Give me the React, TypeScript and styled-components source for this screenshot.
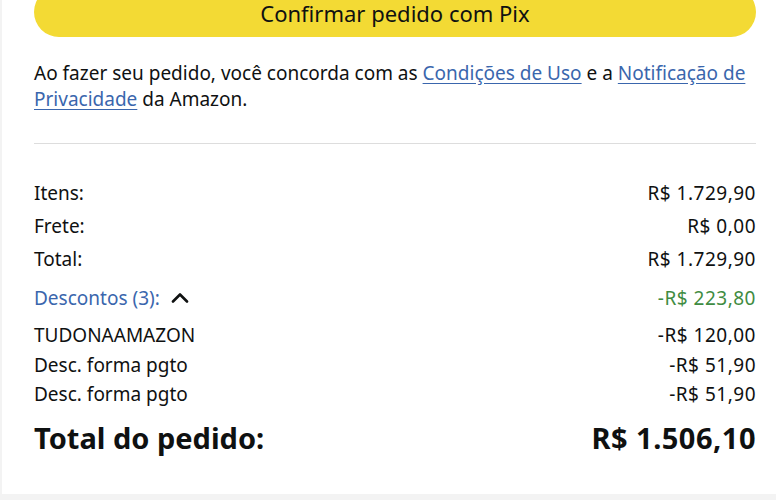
import React from "react";
import styled, { createGlobalStyle } from "styled-components";

const GlobalStyle = createGlobalStyle`
  html, body {
    margin: 0;
    padding: 0;
    background: #f3f3f3;
  }
  body {
    font-family: "Noto Sans", "Liberation Sans", Arial, sans-serif;
    color: #0f1111;
  }
`;

const Card = styled.div`
  margin-left: 2px;
  height: 494px;
  background: #ffffff;
  box-sizing: border-box;
  padding: 0 20px 0 32px;
  overflow: hidden;
  display: flex;
  flex-direction: column;
`;

const ConfirmButton = styled.button`
  margin-top: -13px;
  height: 50px;
  width: 100%;
  border: none;
  border-radius: 25px;
  background: #f3da34;
  color: #0f1111;
  font-family: inherit;
  font-size: 22px;
  line-height: 1;
  display: flex;
  align-items: center;
  justify-content: center;
  padding: 2px 0 0;
  box-sizing: border-box;
  cursor: pointer;
`;

const Legal = styled.p`
  margin: 23px 0 0;
  font-size: 19px;
  line-height: 26px;
`;

const Link = styled.a`
  color: #3a66ad;
  text-decoration: underline;
  text-underline-offset: 3px;
`;

const Divider = styled.hr`
  margin: 31px 0 0;
  border: none;
  height: 1px;
  background: #dddddd;
`;

const Summary = styled.div`
  margin-top: 32px;
  display: flex;
  flex-direction: column;
`;

const Row = styled.div<{ $compact?: boolean; $gap?: number }>`
  display: flex;
  justify-content: space-between;
  align-items: center;
  height: ${(p) => (p.$compact ? "29.5px" : "33px")};
  margin-top: ${(p) => p.$gap ?? 0}px;
  font-size: 19px;
`;

const Label = styled.span<{ $tone?: "blue" }>`
  display: flex;
  align-items: center;
  gap: 11px;
  color: ${(p) => (p.$tone === "blue" ? "#3a66ad" : "#0f1111")};
`;

const Amount = styled.span<{ $tone?: "green" }>`
  letter-spacing: 0.5px;
  color: ${(p) => (p.$tone === "green" ? "#3f8c42" : "#0f1111")};
`;

const TotalRow = styled.div`
  display: flex;
  justify-content: space-between;
  align-items: center;
  margin-top: 8px;
  height: 40px;
  font-size: 29px;
  font-weight: 700;
`;

const TotalAmount = styled.span`
  letter-spacing: 0.5px;
`;

const Chevron = () => (
  <svg width="18" height="11" viewBox="0 0 18 11" aria-hidden="true">
    <polyline
      points="2,9.5 9,2.5 16,9.5"
      fill="none"
      stroke="#0f1111"
      strokeWidth="2.6"
      strokeLinecap="round"
      strokeLinejoin="round"
    />
  </svg>
);

export default function App() {
  return (
    <>
      <GlobalStyle />
      <Card>
        <ConfirmButton>Confirmar pedido com Pix</ConfirmButton>
        <Legal>
          Ao fazer seu pedido, você concorda com as <Link href="#">Condições de Uso</Link> e a{" "}
          <Link href="#">Notificação de Privacidade</Link> da Amazon.
        </Legal>
        <Divider />
        <Summary>
          <Row>
            <Label>Itens:</Label>
            <Amount>R$ 1.729,90</Amount>
          </Row>
          <Row>
            <Label>Frete:</Label>
            <Amount>R$ 0,00</Amount>
          </Row>
          <Row>
            <Label>Total:</Label>
            <Amount>R$ 1.729,90</Amount>
          </Row>
          <Row $gap={6}>
            <Label $tone="blue">
              Descontos (3): <Chevron />
            </Label>
            <Amount $tone="green">-R$ 223,80</Amount>
          </Row>
          <Row $compact $gap={6.5}>
            <Label>TUDONAAMAZON</Label>
            <Amount>-R$ 120,00</Amount>
          </Row>
          <Row $compact>
            <Label>Desc. forma pgto</Label>
            <Amount>-R$ 51,90</Amount>
          </Row>
          <Row $compact>
            <Label>Desc. forma pgto</Label>
            <Amount>-R$ 51,90</Amount>
          </Row>
          <TotalRow>
            <span>Total do pedido:</span>
            <TotalAmount>R$ 1.506,10</TotalAmount>
          </TotalRow>
        </Summary>
      </Card>
    </>
  );
}
